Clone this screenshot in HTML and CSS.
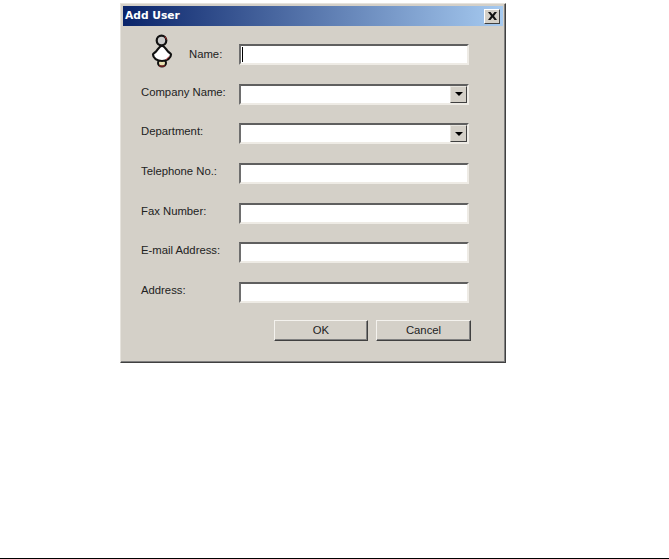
FILE: index.html
```html
<!DOCTYPE html>
<html>
  <head>
    <title>Add User</title>
    <link rel="stylesheet" href="styles.css">
  </head>
  <body>
    <div class="page">
      <div class="dialog">
        <div class="titlebar">
          <span class="title">Add User</span>
          <button class="close">
            <svg width="9" height="8" viewBox="0 0 9 8"><path d="M0 0h2.500l2 2.500 2-2.500H9L6 4l3 4H6.500l-2-2.500-2 2.500H0l3-4z" fill="#111"/></svg>
          </button>
        </div>
        <div class="form">
          <div class="row">
            <svg class="user-icon" width="22" height="34" viewBox="0 0 22 34">
              <ellipse cx="11" cy="29" rx="4" ry="3.500" fill="#e8e0b0" stroke="#111" stroke-width="2"/>
              <path d="M11 11.500C7.500 13 7 15.500 5 17.500 3.500 19 2 19.500 2 20.500 2 24 6 27 11 27s9-3 9-6.500c0-1-1.500-1.500-3-3-2-2-2.500-4.500-6-6z" fill="#fff" stroke="#111" stroke-width="2.200"/>
              <circle cx="10.500" cy="6.500" r="4.800" fill="#c8c8c8" stroke="#111" stroke-width="2.200"/>
              <path d="M14 2.500l1.500 3M18 22.500l-3 3.500M8 32h6" stroke="#a52a2a" fill="none"/>
            </svg>
            <label class="name-label">Name:</label>
            <div class="field"><span class="caret"></span></div>
          </div>
          <div class="row">
            <label class="label">Company Name:</label>
            <div class="field"><button class="drop"><span class="arrow"></span></button></div>
          </div>
          <div class="row">
            <label class="label">Department:</label>
            <div class="field"><button class="drop"><span class="arrow"></span></button></div>
          </div>
          <div class="row">
            <label class="label">Telephone No.:</label>
            <div class="field"></div>
          </div>
          <div class="row">
            <label class="label">Fax Number:</label>
            <div class="field"></div>
          </div>
          <div class="row">
            <label class="label">E-mail Address:</label>
            <div class="field"></div>
          </div>
          <div class="row">
            <label class="label">Address:</label>
            <div class="field"></div>
          </div>
          <div class="buttons">
            <button class="btn ok">OK</button>
            <button class="btn">Cancel</button>
          </div>
        </div>
      </div>
      <div class="rule"></div>
    </div>
  </body>
</html>
```

FILE: styles.css
```css
html, body {
  margin: 0;
  height: 100%;
  background: #fff;
}

.page {
  height: 100%;
  display: flex;
  flex-direction: column;
  justify-content: space-between;
  overflow: hidden;
  font-family: "Liberation Sans", Arial, sans-serif;
  font-size: 11.3px;
  color: #222;
}

.dialog {
  box-sizing: border-box;
  width: 386px;
  height: 360px;
  margin: 3px 0 0 120px;
  padding: 2px;
  background: #d4d0c8;
  border: 1px solid;
  border-color: #e6e3dd #404040 #404040 #e6e3dd;
  box-shadow: inset -1px -1px 0 #808080;
}

.titlebar {
  height: 20px;
  display: flex;
  align-items: center;
  justify-content: space-between;
  padding: 0 3px 0 2px;
  background: linear-gradient(to right, #0a246a, #a6caf0);
}

.title {
  margin-top: -2px;
  color: #fff;
  font-family: "DejaVu Sans", sans-serif;
  font-size: 10.7px;
  font-weight: bold;
}

.close {
  box-sizing: border-box;
  width: 16px;
  height: 15px;
  padding: 0;
  display: flex;
  align-items: center;
  justify-content: center;
  background: #d4d0c8;
  border: 1px solid;
  border-color: #fff #404040 #404040 #fff;
}

.form {
  display: flex;
  flex-direction: column;
  gap: 18.67px;
  padding: 18px 0 0 18px;
}

.row {
  height: 21px;
  display: flex;
  width: 328px;
}

.label {
  width: 98px;
  margin-top: 2px;
  white-space: nowrap;
}

.name-label {
  width: 50px;
  margin-left: 16px;
  margin-top: 4px;
}

.user-icon {
  margin: -10px 0 0 10px;
  flex: none;
}

.field {
  box-sizing: border-box;
  width: 230px;
  height: 21px;
  margin-left: auto;
  display: flex;
  align-items: center;
  justify-content: space-between;
  background: #fff;
  border: 2px solid;
  border-color: #5f5f5f #eeebe5 #eeebe5 #6e6e6e;
}

.caret {
  width: 1px;
  height: 15px;
  margin-left: 1px;
  background: #000;
}

.drop {
  box-sizing: border-box;
  width: 17px;
  height: 17px;
  margin-left: auto;
  padding: 0;
  display: flex;
  align-items: center;
  justify-content: center;
  background: #d4d0c8;
  border: 1px solid;
  border-color: #e8e6e0 #404040 #404040 #e8e6e0;
}

.arrow {
  width: 0;
  height: 0;
  border-style: solid;
  border-width: 4px 4px 0;
  border-color: #000 transparent transparent;
}

.buttons {
  display: flex;
  gap: 8px;
  margin-top: -2px;
  margin-left: 133px;
}

.btn {
  box-sizing: border-box;
  width: 95px;
  height: 21px;
  padding: 0;
  font: inherit;
  color: inherit;
  background: #d4d0c8;
  border: 1px solid;
  border-color: #f4f2ee #404040 #404040 #f4f2ee;
  box-shadow: inset -1px -1px 0 #808080;
}

.ok {
  width: 94px;
}

.rule {
  height: 1px;
  background: #000;
}
```
